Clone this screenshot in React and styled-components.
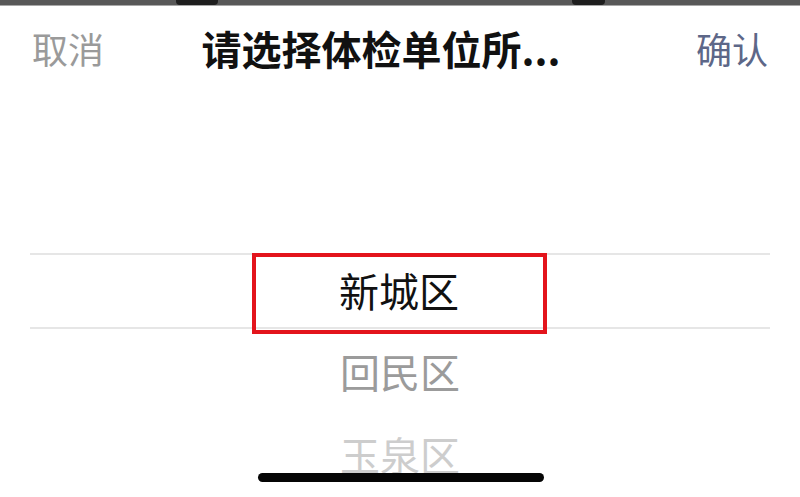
import React from "react";
import styled, { createGlobalStyle } from "styled-components";

const GlobalStyle = createGlobalStyle`
    html, body {
        margin: 0;
        padding: 0;
        background: #fff;
    }
    body {
        font-family: "Noto Sans CJK SC", "Noto Sans", sans-serif;
        width: 800px;
        height: 497px;
        overflow: hidden;
    }
`;

const Screen = styled.div`
    position: relative;
    display: flex;
    flex-direction: column;
    width: 800px;
    height: 497px;
    background: #fff;
    overflow: hidden;
`;

const StatusStrip = styled.div`
    display: flex;
    height: 5px;
    background: #585858;
    border-bottom: 1px solid #a8a8a8;
`;

const StripTab = styled.div`
    width: ${(p) => p.w}px;
    margin-left: ${(p) => p.left}px;
    height: 5px;
    background: #1e1e1e;
    border-radius: 0 0 4px 4px;
`;

const Header = styled.div`
    display: flex;
    align-items: center;
    justify-content: space-between;
    height: 84px;
    padding: 0 32px;
`;

const SideButton = styled.span`
    font-size: 36px;
    line-height: 1;
    color: ${(p) => p.color};
`;

const Title = styled.span`
    font-size: 40px;
    font-weight: 700;
    color: #111;
    line-height: 1;
    margin-right: 38px;
`;

const Picker = styled.div`
    display: flex;
    flex-direction: column;
    padding-top: 163px;
`;

const Band = styled.div`
    display: flex;
    justify-content: center;
    margin: 0 30px;
    height: 76px;
    border-top: 2px solid #e6e6e6;
    border-bottom: 2px solid #e6e6e6;
    box-sizing: border-box;
`;

const SelectedBox = styled.div`
    display: flex;
    align-items: center;
    justify-content: center;
    width: 295px;
    height: 81px;
    margin-top: -2px;
    margin-left: -2px;
    padding-bottom: 8px;
    border: 4px solid #e3141c;
    box-sizing: border-box;
    font-size: 40px;
    color: #111;
`;

const Item = styled.div`
    display: flex;
    align-items: center;
    justify-content: center;
    height: 83px;
    font-size: 40px;
    color: ${(p) => p.color};
`;

const HomeIndicator = styled.div`
    position: absolute;
    left: 258px;
    bottom: 15px;
    width: 286px;
    height: 9px;
    border-radius: 5px;
    background: #050505;
`;

export default function App() {
    return (
        <Screen>
            <GlobalStyle />
            <StatusStrip>
                <StripTab left={176} w={42} />
                <StripTab left={354} w={33} />
            </StatusStrip>
            <Header>
                <SideButton color="#9a9a9a">取消</SideButton>
                <Title>请选择体检单位所...</Title>
                <SideButton color="#5d6788">确认</SideButton>
            </Header>
            <Picker>
                <Band>
                    <SelectedBox>新城区</SelectedBox>
                </Band>
                <Item color="#9b9b9b">回民区</Item>
                <Item color="#cdcdcd">玉泉区</Item>
            </Picker>
            <HomeIndicator />
        </Screen>
    );
}
